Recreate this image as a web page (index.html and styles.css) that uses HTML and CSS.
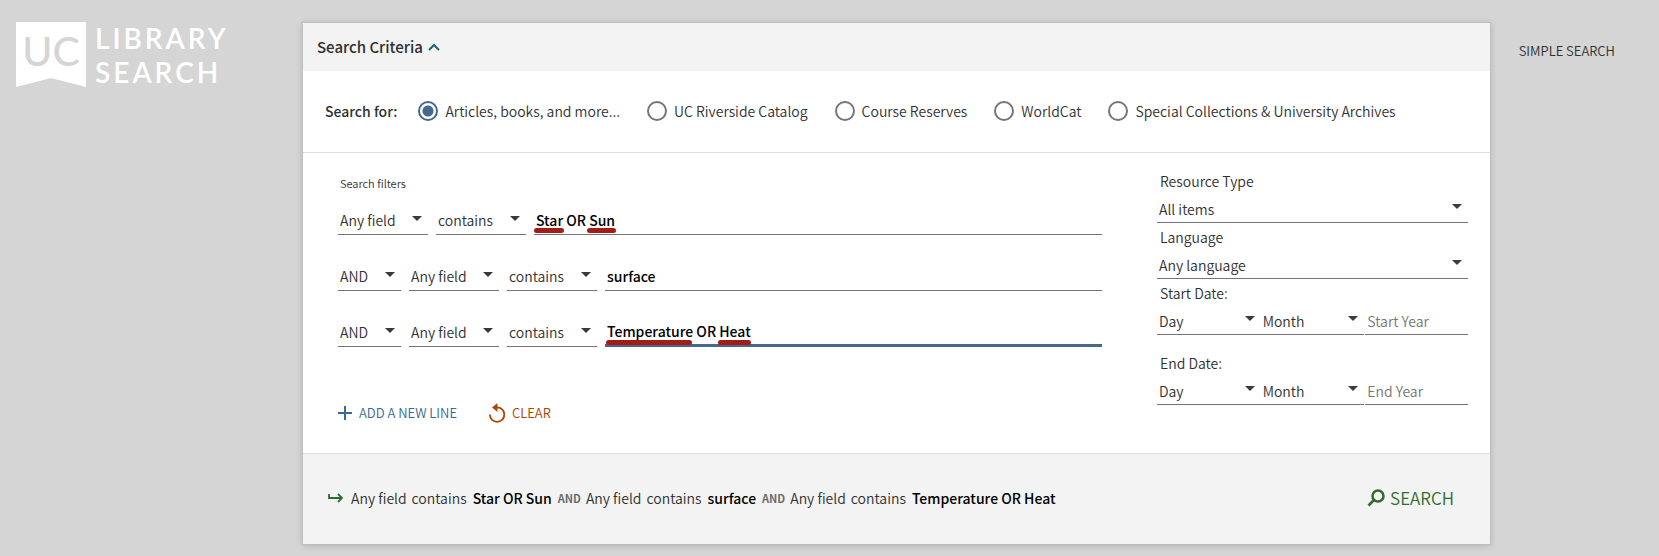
FILE: index.html
```html
<!DOCTYPE html>
<html lang="en">
<head>
<meta charset="utf-8">
<meta name="viewport" content="width=device-width, initial-scale=1">
<title>UC Library Search – Advanced Search</title>
<link rel="stylesheet" href="styles.css">
</head>
<body>
<div class="page">
  <header class="brand">
    <a class="logo" href="#" aria-label="UC Library Search">
      <span class="logo-flag">UC</span>
      <span class="logo-words"><span>LIBRARY</span><span>SEARCH</span></span>
    </a>
  </header>

  <form class="card" onsubmit="return false">
    <div class="card-head">
      <button type="button" class="toggle" aria-expanded="true">Search Criteria
        <svg class="chevron" viewBox="0 0 12 8" aria-hidden="true"><path d="M1 7 6 2l5 5"/></svg>
      </button>
    </div>

    <div class="scopes" role="radiogroup" aria-labelledby="scope-title">
      <span class="scope-title" id="scope-title">Search for:</span>
      <label class="scope"><input type="radio" name="scope" checked>Articles, books, and more...</label>
      <label class="scope"><input type="radio" name="scope">UC Riverside Catalog</label>
      <label class="scope"><input type="radio" name="scope">Course Reserves</label>
      <label class="scope"><input type="radio" name="scope">WorldCat</label>
      <label class="scope"><input type="radio" name="scope">Special Collections &amp; University Archives</label>
    </div>

    <div class="criteria">
      <div class="filters">
        <div class="filters-title">Search filters</div>
        <div class="rows">
          <div class="row">
            <span class="pick field"><select aria-label="Field 1"><option>Any field</option></select></span>
            <span class="pick field"><select aria-label="Match 1"><option>contains</option></select></span>
            <span class="term">
              <input type="text" aria-label="Term 1" value="Star OR Sun">
              <i class="mark mark-star"></i><i class="mark mark-sun"></i>
            </span>
          </div>
          <div class="row">
            <span class="pick operator"><select aria-label="Operator 2"><option>AND</option></select></span>
            <span class="pick field"><select aria-label="Field 2"><option>Any field</option></select></span>
            <span class="pick field"><select aria-label="Match 2"><option>contains</option></select></span>
            <span class="term"><input type="text" aria-label="Term 2" value="surface"></span>
          </div>
          <div class="row">
            <span class="pick operator"><select aria-label="Operator 3"><option>AND</option></select></span>
            <span class="pick field"><select aria-label="Field 3"><option>Any field</option></select></span>
            <span class="pick field"><select aria-label="Match 3"><option>contains</option></select></span>
            <span class="term active">
              <input type="text" aria-label="Term 3" value="Temperature OR Heat">
              <i class="mark mark-temperature"></i><i class="mark mark-heat"></i>
            </span>
          </div>
        </div>
        <div class="actions">
          <button type="button" class="action add">
            <svg class="icon-plus" viewBox="0 0 14 14" aria-hidden="true"><path d="M7 0v14M0 7h14"/></svg>ADD A NEW LINE
          </button>
          <button type="button" class="action clear">
            <svg class="icon-reset" viewBox="0 0 16 20" aria-hidden="true"><path class="ring" d="M5 4.400H8A7.200 7.200 0 1 1 .9 11.500"/><path class="head" d="M8.500 0v9L3 4.500z"/></svg>CLEAR
          </button>
        </div>
      </div>

      <div class="limits">
        <div class="limit">
          <label for="type">Resource Type</label>
          <span class="pick"><select id="type"><option>All items</option></select></span>
        </div>
        <div class="limit">
          <label for="language">Language</label>
          <span class="pick"><select id="language"><option>Any language</option></select></span>
        </div>
        <div class="limit">
          <label for="start-day">Start Date:</label>
          <div class="date">
            <span class="pick"><select id="start-day"><option>Day</option></select></span>
            <span class="pick"><select aria-label="Start month"><option>Month</option></select></span>
            <input class="year" type="text" aria-label="Start Year" placeholder="Start Year">
          </div>
        </div>
        <div class="limit end">
          <label for="end-day">End Date:</label>
          <div class="date">
            <span class="pick"><select id="end-day"><option>Day</option></select></span>
            <span class="pick"><select aria-label="End month"><option>Month</option></select></span>
            <input class="year" type="text" aria-label="End Year" placeholder="End Year">
          </div>
        </div>
      </div>
    </div>

    <div class="card-foot">
      <div class="summary">
        <svg class="icon-arrow" viewBox="0 0 15 10" aria-hidden="true"><path d="M1 1v4h12.500M10 1l4 4-4 4"/></svg>
        <span>Any field</span><span>contains</span><b>Star OR Sun</b>
        <em>AND</em><span>Any field</span><span>contains</span><b>surface</b>
        <em>AND</em><span>Any field</span><span>contains</span><b>Temperature OR Heat</b>
      </div>
      <button type="submit" class="submit">
        <svg class="icon-search" viewBox="0 0 18 18" aria-hidden="true"><circle cx="11" cy="7" r="5.500"/><path d="M7 11l-5.500 5.500"/></svg>SEARCH
      </button>
    </div>
  </form>

  <nav class="side"><a href="#">SIMPLE SEARCH</a></nav>
</div>
</body>
</html>
```
FILE: styles.css
```css
* { box-sizing: border-box; }

body {
  margin: 0;
  background: #d5d5d5;
  color: #303030;
  font-family: "Noto Sans CJK SC", "Noto Sans", sans-serif;
  font-size: 14px;
  font-weight: 350;
  line-height: 20px;
}

button, input, select {
  margin: 0;
  padding: 0;
  border: 0;
  border-radius: 0;
  background: none;
  color: inherit;
  font: inherit;
}

a { color: inherit; text-decoration: none; }
svg { fill: none; stroke: currentColor; flex: none; }

.page {
  display: grid;
  grid-template-columns: 302px minmax(0, 1fr) 168px;
  align-items: start;
  padding: 22px 0 11px;
}

/* Logo */
.brand { padding-left: 16px; }
.logo { display: flex; gap: 9px; color: #fff; font-family: Lato, sans-serif; }
.logo-flag {
  width: 70px;
  height: 65px;
  background: #fff;
  clip-path: polygon(0 0, 100% 0, 100% 100%, 50% 86%, 0 100%);
  color: #d5d5d5;
  font-size: 41px;
  font-weight: 500;
  line-height: 58px;
  text-align: center;
}
.logo-words { display: grid; grid-auto-rows: 34px; font-size: 28px; font-weight: 600; line-height: 32px; letter-spacing: 3px; }

/* Card */
.card {
  border: 1px solid #bfbfbf;
  background: #fff;
  box-shadow: 0 1px 6px rgba(0, 0, 0, .16);
}
.card-head { display: flex; align-items: center; height: 48px; padding: 0 14px; background: #f3f3f3; }
.toggle { display: flex; align-items: center; gap: 5px; font-size: 15px; font-weight: 500; }
.chevron { width: 12px; height: 8px; color: #1a6572; stroke-width: 2; }

.scopes {
  display: flex;
  align-items: center;
  gap: 27px;
  height: 82px;
  padding: 0 22px 2px;
  border-bottom: 1px solid #e0e0e0;
  white-space: nowrap;
}
.scope-title { margin-right: -6px; font-weight: 500; }
.scope { display: flex; align-items: center; gap: 7px; }
.scope input {
  appearance: none;
  width: 20px;
  height: 20px;
  border: 2px solid #757575;
  border-radius: 50%;
}
.scope input:checked {
  border-color: #44698a;
  background: radial-gradient(circle, #44698a 5px, transparent 6px);
}

.criteria {
  display: grid;
  grid-template-columns: minmax(0, 1fr) 311px;
  column-gap: 55px;
  padding: 0 22px 0 35px;
  border-bottom: 1px solid #e0e0e0;
}

.filters { padding: 20px 0 28px; }
.filters-title { padding-left: 2px; font-size: 11px; }
.rows { display: grid; gap: 27px; margin-top: 13px; }
.row { display: flex; gap: 8px; }

.pick { display: grid; border-bottom: 1px solid #757575; }
.pick select {
  grid-area: 1 / 1;
  appearance: none;
  width: 100%;
  height: 27px;
  padding-left: 2px;
  outline: 0;
}
.row .pick select { height: 28px; }
.pick::after {
  content: "";
  grid-area: 1 / 1;
  place-self: center end;
  margin: 0 6px 4px 0;
  border: 5px solid transparent;
  border-top-color: #3a3a3a;
  border-bottom: 0;
  pointer-events: none;
}
.field { width: 90px; }
.operator { width: 63px; }

.term { position: relative; display: grid; flex: 1; border-bottom: 1px solid #757575; }
.term input { width: 100%; height: 28px; padding-left: 2px; color: #000; font-weight: 500; outline: 0; }
.term.active { border-bottom: 3px solid #44698a; }
.term.active input { height: 26px; }

/* Highlighter strokes under the keywords */
.mark { position: absolute; top: 22px; height: 5px; border-radius: 3px; background: #a51b18; }
.mark-star { left: 0; width: 30px; }
.mark-sun { left: 53px; width: 29px; }
.mark-temperature { left: 1px; width: 86px; }
.mark-heat { left: 113px; width: 33px; }

.actions { display: flex; gap: 32px; margin-top: 54px; }
.action { display: flex; align-items: center; gap: 7px; height: 24px; padding: 0; font-size: 13px; }
.add { color: #3a6a92; }
.clear { color: #ad4600; }
.icon-plus { width: 14px; height: 14px; stroke-width: 2; }
.icon-reset { width: 16px; height: 20px; stroke-width: 1.800; }
.icon-reset .head { fill: currentColor; stroke: none; }

.limits { padding-top: 14px; }
.limit > label { display: block; padding-left: 3px; line-height: 28px; }
.end { margin-top: 14px; }
.date { display: grid; grid-template-columns: 1fr 1fr 1fr; }
.year { width: calc(100% - 1px); height: 28px; margin-left: 1px; padding-left: 2px; border-bottom: 1px solid #757575; outline: 0; }
.year::placeholder { color: #757575; opacity: 1; }

.card-foot {
  display: flex;
  align-items: center;
  justify-content: space-between;
  height: 90px;
  padding: 0 36px 2px 25px;
  background: #f3f3f3;
}
.summary { display: flex; align-items: center; gap: 5px; white-space: nowrap; }
.summary b { margin: 0 1px; color: #000; font-weight: 500; }
.summary em { color: #6b6b6b; font-size: 11px; font-style: normal; font-weight: 700; }
.icon-arrow { width: 15px; height: 10px; margin-right: 3px; color: #2e6b2e; stroke-width: 1.800; }
.submit { display: flex; align-items: center; gap: 5px; color: #2e6b2e; font-size: 17px; }
.icon-search { width: 18px; height: 18px; stroke-width: 2.500; }

.side { padding: 19px 44px 0 0; font-size: 13px; text-align: right; }
```
